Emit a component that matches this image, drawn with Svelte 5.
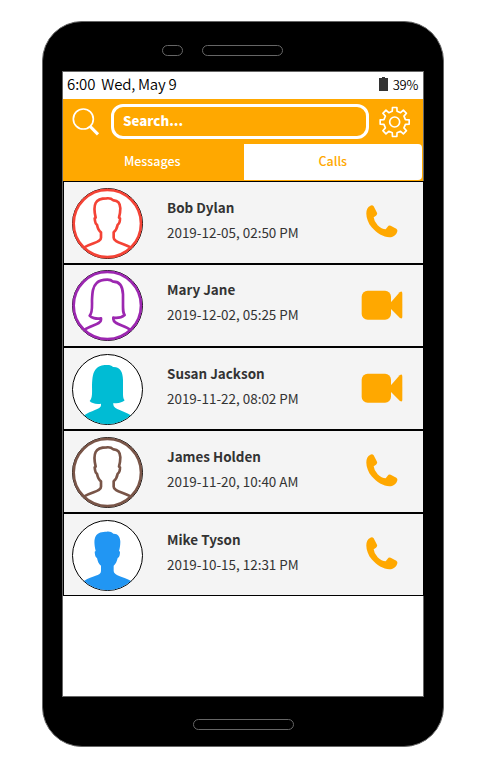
<script>
  const man =
    'M73 208C96 193 123 194 123 179V163C116 158 113 150 111 140C106 138 105 132 104 121L107 119C102 98 102 85 107 75C113 63 127 61 140 61C149 60 155 62 160 67C173 66 181 77 181 91C181 103 179 112 177 119L180 121C180 131 178 138 173 140C171 150 167 158 161 163V179C161 193 188 195 212 208';
  const woman =
    'M73 210C91 196 123 193 123 180V175C108 178 94 173 89 167C98 158 96 142 96 120C97 98 98 80 110 69C119 60 131 59 142 59C150 59 155 61 159 65C182 64 188 81 189 103V134C189 154 189 158 194 165C187 171 176 175 160 173V178C160 192 194 196 212 210';

  const calls = [
    { name: 'Bob Dylan', time: '2019-12-05, 02:50 PM', color: '#f44336', shape: man, filled: false, video: false },
    { name: 'Mary Jane', time: '2019-12-02, 05:25 PM', color: '#9c27b0', shape: woman, filled: false, video: true },
    { name: 'Susan Jackson', time: '2019-11-22, 08:02 PM', color: '#00bcd4', shape: woman, filled: true, video: true },
    { name: 'James Holden', time: '2019-11-20, 10:40 AM', color: '#795548', shape: man, filled: false, video: false },
    { name: 'Mike Tyson', time: '2019-10-15, 12:31 PM', color: '#2196f3', shape: man, filled: true, video: false }
  ];

  // Eight-toothed cog outline
  const cog = (() => {
    const pts = [];
    for (let i = 0; i < 8; i++) {
      const a = (i * Math.PI) / 4;
      for (const [r, d] of [[33, -0.22], [44, -0.15], [44, 0.15], [33, 0.22]]) {
        pts.push(`${(47 + r * Math.sin(a + d)).toFixed(1)},${(47 - r * Math.cos(a + d)).toFixed(1)}`);
      }
    }
    return pts.join(' ');
  })();
</script>

<div class="phone">
  <div class="top"><i class="sensor"></i><i class="speaker"></i></div>
  <main class="screen">
    <div class="status">
      <span class="clock">6:00</span><span class="date">Wed, May 9</span>
      <svg class="battery" width="9" height="14" viewBox="0 0 9 14"><path d="M3 0H6V1H9V14H0V1H3Z" fill="#333" /></svg>
      <span class="percent">39%</span>
    </div>
    <header>
      <div class="searchbar">
        <svg class="lens" width="28" height="28" viewBox="0 0 84 84" fill="none" stroke="#fff">
          <circle cx="34" cy="33" r="30" stroke-width="5" />
          <path d="M55 56L78 79" stroke-width="9" />
        </svg>
        <div class="field">Search...</div>
        <svg class="cog" width="32" height="32" viewBox="0 -1 96 96" fill="none" stroke="#fff" stroke-width="5" stroke-linejoin="round">
          <polygon points={cog} />
          <circle cx="47" cy="47" r="15" />
        </svg>
      </div>
      <nav><span class="tab">Messages</span><span class="tab active">Calls</span></nav>
    </header>
    {#each calls as call}
      <section class="row">
        <svg class="avatar" width="71" height="71" viewBox="36 30 213 213">
          <clipPath id="disc"><circle cx="142.5" cy="136.5" r="104" /></clipPath>
          <circle cx="142.5" cy="136.5" r="105" fill="#fff" stroke="#000" stroke-width="3" />
          {#if call.filled}
            <g clip-path="url(#disc)">
              <path d="{call.shape}L224 214V245H60V214Z" fill={call.color} transform="translate(0 4)" />
            </g>
          {:else}
            <circle cx="142" cy="136.5" r="101" fill="none" stroke={call.color} stroke-width="8" />
            <path d={call.shape} fill="none" stroke={call.color} stroke-width="8" stroke-linejoin="round" />
          {/if}
        </svg>
        <div class="info"><strong>{call.name}</strong><span>{call.time}</span></div>
        <div class="action">
          {#if call.video}
            <svg width="42" height="30" viewBox="0 0 126 90" fill="#ffa800">
              <rect x="2" y="2" width="88" height="87" rx="18" />
              <path d="M87 40L116 7Q124 1 124 11V80Q124 89 116 83L87 54Z" />
            </svg>
          {:else}
            <svg class="handset" width="33" height="33" viewBox="0 0 99 99" fill="#ffa800">
              <path d="M16 2Q22 -1 26 4L36 23Q38 27 33 32L26 37Q27 49 38 61Q50 73 62 73L68 65Q71 60 77 62L94 71Q98 74 97 79Q94 92 81 96C61 100 37 87 20 67C2 45 -3 11 16 2Z" />
            </svg>
          {/if}
        </div>
      </section>
    {/each}
  </main>
  <div class="bottom"><i class="home"></i></div>
</div>

<style>
  :global(body) { background: #fff; }
  .phone {
    box-sizing: border-box;
    width: 402px;
    height: 726px;
    margin: 21px 0 0 42px;
    padding: 0 19px;
    background: #000;
    border: 1px solid #666;
    border-radius: 40px;
    font-family: "Noto Sans CJK SC", "Noto Sans", sans-serif;
    color: #333;
  }
  :global(#app) { display: flow-root; }
  .top { display: flex; height: 49px; box-sizing: border-box; padding: 23px 0 0 100.4px; gap: 19px; }
  i { box-sizing: border-box; height: 11px; border: 1px solid #666; border-radius: 6px; }
  .sensor { width: 21px; }
  .speaker { width: 81px; }
  .screen { box-sizing: border-box; width: 362px; height: 626px; border: 1px solid #666; background: #fff; }
  .bottom { display: flex; padding: 22px 0 0 130.5px; }
  .home { width: 101px; }
  .status { display: flex; align-items: center; height: 27px; padding: 0 5px 0 4px; line-height: 24px; white-space: nowrap; color: #000; }
  .clock, .date { margin-top: -3px; font-size: 15px; font-weight: 350; letter-spacing: -0.25px; }
  .clock { letter-spacing: -0.1px; }
  .date { margin-left: 6px; }
  .battery { margin: -3px 5px 0 auto; }
  .percent { margin-top: -2px; font-size: 13px; font-weight: 350; letter-spacing: -0.3px; }
  header { height: 82px; background: #ffa800; }
  .searchbar { display: flex; height: 45px; box-sizing: border-box; padding: 5px 0 0 9px; }
  .lens { margin-top: 4px; }
  .field {
    box-sizing: border-box;
    width: 258px;
    height: 35px;
    margin: 0 10px 0 11px;
    padding-left: 9px;
    border: 3px solid #fff;
    border-radius: 12px;
    color: #fff;
    font-size: 13.3px;
    font-weight: 900;
    line-height: 27px;
  }
  .cog { margin-top: 2px; }
  nav { display: flex; height: 36px; }
  .tab { width: 179px; padding-right: 2px; text-align: center; font-size: 12.5px; line-height: 33px; color: #fff; font-weight: 500; }
  .tab.active { width: 179px; padding: 0; margin-right: 1px; background: #fff; color: #ffa800; border-radius: 0 4px 4px 0; }
  .row {
    display: flex;
    box-sizing: border-box;
    width: 361px;
    height: 83px;
    padding: 6px 0 0 8px;
    border: 1px solid #000;
    background: #f4f4f4;
  }
  .row:nth-of-type(2) { padding-top: 5px; }
  .avatar { flex: none; }
  .info { display: flex; flex-direction: column; width: 194px; padding: 7px 0 0 24px; font-size: 13.45px; line-height: 25px; white-space: nowrap; }
  .action { display: flex; width: 42px; height: 33px; margin-top: 17px; justify-content: center; align-items: center; }
  .row:nth-of-type(2) .action { margin-top: 18px; }
  .handset { margin-right: 2px; }
</style>
